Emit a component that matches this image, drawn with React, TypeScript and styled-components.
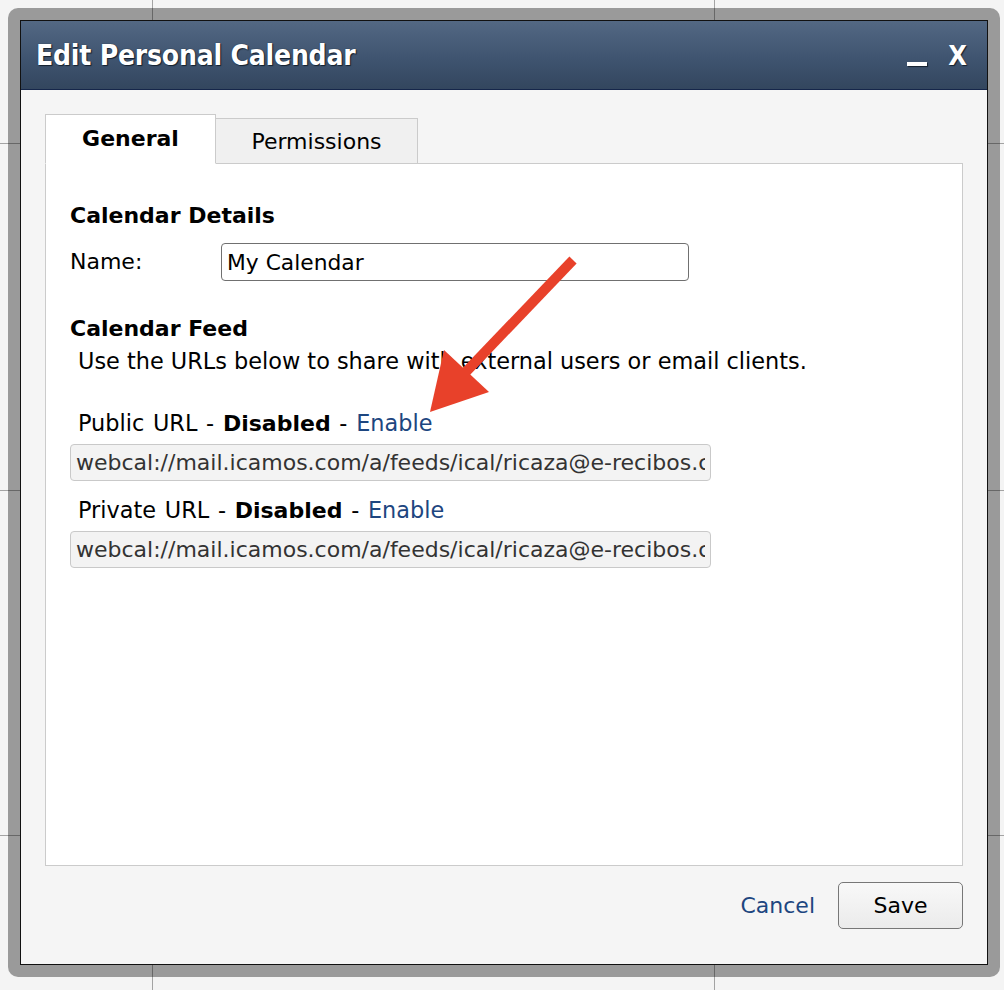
import styled, { createGlobalStyle } from "styled-components";

const GlobalStyle = createGlobalStyle`
  html, body {
    margin: 0;
    padding: 0;
    background: #f4f4f4;
  }
  body {
    font-family: "DejaVu Sans", Verdana, sans-serif;
    color: #000;
  }
`;

const Page = styled.div`
  position: relative;
  width: 1004px;
  height: 990px;
  box-sizing: border-box;
  padding: 8px 4px 13px 8px;
  background-color: #f4f4f4;
  background-image:
    linear-gradient(
      to right,
      transparent 152px,
      #a3a3a3 152px,
      #a3a3a3 153px,
      transparent 153px,
      transparent 714px,
      #a3a3a3 714px,
      #a3a3a3 715px,
      transparent 715px
    ),
    linear-gradient(
      to bottom,
      transparent 143px,
      #a3a3a3 143px,
      #a3a3a3 144px,
      transparent 144px,
      transparent 490px,
      #a3a3a3 490px,
      #a3a3a3 491px,
      transparent 491px,
      transparent 835px,
      #a3a3a3 835px,
      #a3a3a3 836px,
      transparent 836px
    );
`;

const Frame = styled.div`
  box-sizing: border-box;
  width: 992px;
  height: 969px;
  padding: 12px;
  border-radius: 10px;
  background: rgba(0, 0, 0, 0.37);
`;

const Window = styled.div`
  box-sizing: border-box;
  height: 100%;
  display: flex;
  flex-direction: column;
  border: 1px solid #111;
  background: #f5f5f5;
`;

const TitleBar = styled.div`
  display: flex;
  align-items: center;
  height: 68px;
  padding: 0 20px 0 15px;
  background: linear-gradient(to bottom, #536883 0%, #3f5470 55%, #33465e 100%);
  border-bottom: 1px solid #15264a;
`;

const Title = styled.h1`
  flex: 1;
  margin: 0;
  font-family: "DejaVu Sans Condensed", "DejaVu Sans", sans-serif;
  font-stretch: condensed;
  font-size: 28px;
  font-weight: 700;
  color: #fff;
  text-shadow: 1px 1px 1px #14202e, 0 0 1px #14202e;
  letter-spacing: -0.2px;
`;

const Controls = styled.div`
  display: flex;
  align-items: center;
  gap: 21px;
`;

const Minimize = styled.span`
  display: block;
  width: 20px;
  height: 4px;
  margin-top: 17px;
  background: #fff;
  box-shadow: 1px 1px 1px #14202e;
`;

const Close = styled.span`
  font-family: "DejaVu Sans Condensed", "DejaVu Sans", sans-serif;
  font-stretch: condensed;
  font-size: 27px;
  font-weight: 700;
  color: #fff;
  text-shadow: 1px 1px 1px #14202e;
`;

const Body = styled.div`
  flex: 1;
  display: flex;
  flex-direction: column;
  padding: 24px 24px 35px 24px;
`;

const Tabs = styled.div`
  display: flex;
  align-items: flex-end;
  position: relative;
  z-index: 1;
  margin-bottom: -1px;
`;

const Tab = styled.div<{ $active?: boolean }>`
  box-sizing: border-box;
  display: flex;
  align-items: center;
  justify-content: center;
  width: ${(p) => (p.$active ? "171px" : "202px")};
  height: ${(p) => (p.$active ? "50px" : "46px")};
  padding-top: 3px;
  border: 1px solid #cbcbcb;
  border-bottom: ${(p) => (p.$active ? "1px solid #fff" : "1px solid #cbcbcb")};
  border-left: ${(p) => (p.$active ? "1px solid #cbcbcb" : "none")};
  background: ${(p) => (p.$active ? "#fff" : "#f0f0f0")};
  font-size: 22px;
  font-weight: ${(p) => (p.$active ? 700 : 400)};
  padding-bottom: ${(p) => (p.$active ? "5px" : "2px")};
`;

const Panel = styled.div`
  flex: 1;
  box-sizing: border-box;
  border: 1px solid #cbcbcb;
  background: #fff;
  padding: 38px 24px 0 24px;
  display: flex;
  flex-direction: column;
  align-items: flex-start;
`;

const Heading = styled.h2<{ $gap?: number }>`
  margin: ${(p) => p.$gap ?? 0}px 0 0 0;
  font-size: 22px;
  line-height: 28px;
  font-weight: 700;
`;

const FieldRow = styled.div`
  display: flex;
  align-items: center;
  margin-top: 13px;
`;

const Label = styled.label`
  width: 151px;
  font-size: 22px;
  line-height: 28px;
`;

const TextInput = styled.input`
  box-sizing: border-box;
  width: 468px;
  height: 38px;
  padding: 0 5px;
  border: 1px solid #707070;
  border-radius: 4px;
  background: #fff;
  font-family: "DejaVu Sans", sans-serif;
  font-size: 21.8px;
  color: #000;
  outline: none;
`;

const Text = styled.p<{ $gap?: number }>`
  margin: ${(p) => p.$gap ?? 0}px 0 0 8px;
  font-size: 22.4px;
  line-height: 28px;
  white-space: nowrap;
`;

const UrlLabel = styled(Text)`
  word-spacing: 1.6px;
`;

const Strong = styled.b`
  font-size: 22px;
`;

const Link = styled.a`
  color: #1d4680;
  text-decoration: none;
  cursor: pointer;
`;

const UrlInput = styled.input<{ $gap?: number }>`
  box-sizing: border-box;
  width: 641px;
  height: 37px;
  margin-top: ${(p) => p.$gap ?? 0}px;
  padding: 0 5px;
  border: 1px solid #c9c9c9;
  border-radius: 4px;
  background: #f3f3f3;
  font-family: "DejaVu Sans", sans-serif;
  font-size: 22px;
  color: #333;
  outline: none;
`;

const Footer = styled.div`
  display: flex;
  justify-content: flex-end;
  align-items: center;
  gap: 23px;
  margin-top: 16px;
`;

const SaveButton = styled.button`
  box-sizing: border-box;
  width: 125px;
  height: 47px;
  border: 1px solid #777;
  border-radius: 5px;
  background: linear-gradient(to bottom, #f8f8f8, #ebebeb);
  font-family: "DejaVu Sans", sans-serif;
  font-size: 22px;
  color: #000;
`;

const CancelLink = styled(Link)`
  font-size: 22px;
`;

const Annotation = styled.svg`
  position: absolute;
  left: 0;
  top: 0;
  pointer-events: none;
`;

const URL =
  "webcal://mail.icamos.com/a/feeds/ical/ricaza@e-recibos.com/calendar.ics";

export default function App() {
  return (
    <Page>
      <GlobalStyle />
      <Frame>
        <Window>
          <TitleBar>
            <Title>Edit Personal Calendar</Title>
            <Controls>
              <Minimize />
              <Close>X</Close>
            </Controls>
          </TitleBar>
          <Body>
            <Tabs>
              <Tab $active>General</Tab>
              <Tab>Permissions</Tab>
            </Tabs>
            <Panel>
              <Heading>Calendar Details</Heading>
              <FieldRow>
                <Label htmlFor="name">Name:</Label>
                <TextInput id="name" defaultValue="My Calendar" />
              </FieldRow>

              <Heading $gap={34}>Calendar Feed</Heading>
              <Text $gap={4}>
                Use the URLs below to share with external users or email clients.
              </Text>

              <UrlLabel $gap={34}>
                Public URL - <Strong>Disabled</Strong> - <Link>Enable</Link>
              </UrlLabel>
              <UrlInput $gap={6} readOnly value={URL} />

              <UrlLabel $gap={15}>
                Private URL - <Strong>Disabled</Strong> - <Link>Enable</Link>
              </UrlLabel>
              <UrlInput $gap={6} readOnly value={URL} />
            </Panel>
            <Footer>
              <CancelLink>Cancel</CancelLink>
              <SaveButton>Save</SaveButton>
            </Footer>
          </Body>
        </Window>
      </Frame>
      <Annotation width="1004" height="990" viewBox="0 0 1004 990">
        <line
          x1="573"
          y1="260"
          x2="462"
          y2="376"
          stroke="#e8412a"
          strokeWidth="10"
        />
        <polygon points="430,412 444,350 489,392" fill="#e8412a" />
      </Annotation>
    </Page>
  );
}
